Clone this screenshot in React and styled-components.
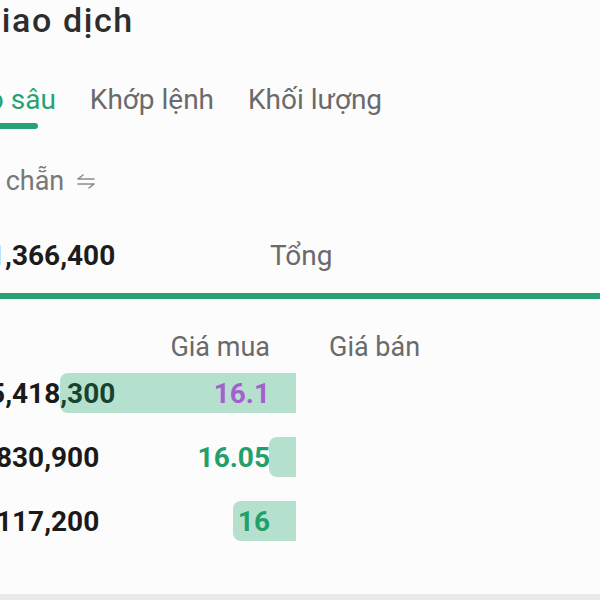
import React from 'react';
import styled, { createGlobalStyle } from 'styled-components';

const GlobalStyle = createGlobalStyle`
  html, body {
    margin: 0;
    padding: 0;
    background: #fcfcfc;
  }
  #root {
    width: 600px;
    height: 600px;
    overflow: hidden;
  }
`;

const bids = [
  { volume: '15,418,300', price: '16.1', tone: 'ref', depth: 236 },
  { volume: '2,830,900', price: '16.05', tone: 'up', depth: 27 },
  { volume: '1,117,200', price: '16', tone: 'up', depth: 63 },
];

function SwapIcon() {
  return (
    <svg width="20" height="16" viewBox="0 0 20 16" fill="none" stroke="#8a8a8a" strokeWidth="1.6" strokeLinecap="round" strokeLinejoin="round">
      <path d="M2 6h16M2 6l5-4" />
      <path d="M2 11h16M18 11l-5 4" />
    </svg>
  );
}

export default function App() {
  return (
    <>
      <GlobalStyle />
      <Page>
        <Title>Giao dịch</Title>

        <Tabs>
          <Tab active>
            Độ sâu
            <Indicator />
          </Tab>
          <Tab>Khớp lệnh</Tab>
          <Tab>Khối lượng</Tab>
        </Tabs>

        <LotLabel>
          Lô chẵn <SwapIcon />
        </LotLabel>

        <TotalRow>
          <TotalValue>1,366,400</TotalValue>
          <TotalLabel>Tổng</TotalLabel>
        </TotalRow>

        <RatioLine />

        <Book>
          <Side>
            <HeadRow>
              <HeadCell align="right">Giá mua</HeadCell>
            </HeadRow>
            {bids.map((b) => (
              <BidRow key={b.price}>
                <Volume>{b.volume}</Volume>
                <Price tone={b.tone}>{b.price}</Price>
                <DepthBar style={{ width: b.depth }} />
              </BidRow>
            ))}
          </Side>
          <Side sell>
            <HeadRow>
              <HeadCell>Giá bán</HeadCell>
            </HeadRow>
          </Side>
        </Book>

        <Footer />
      </Page>
    </>
  );
}

// the screen is scrolled a little to the right, so the page starts off-screen
const Page = styled.div`
  width: 631px;
  margin-left: -31px;
  display: flex;
  flex-direction: column;
  font-family: Roboto, "Liberation Sans", sans-serif;
`;

const Title = styled.div`
  padding-left: 8px;
  font-size: 34px;
  line-height: 40px;
  font-weight: 500;
  letter-spacing: 1.6px;
  color: #2d2d2d;
`;

const Tabs = styled.div`
  margin-top: 43px;
  display: flex;
  gap: 34px;
`;

const Tab = styled.div`
  position: relative;
  font-size: 28px;
  line-height: 34px;
  color: ${(p) => (p.active ? '#27a274' : '#6a6a6a')};
`;

const Indicator = styled.div`
  position: absolute;
  left: 0;
  top: 40px;
  width: 69px;
  height: 6px;
  border-radius: 3px;
  background: #27a274;
`;

const LotLabel = styled.div`
  margin-top: 47px;
  display: flex;
  align-items: center;
  gap: 12px;
  font-size: 27px;
  line-height: 34px;
  color: #787878;
`;

const TotalRow = styled.div`
  margin-top: 40px;
  display: flex;
  align-items: center;
  height: 34px;
`;

const TotalValue = styled.div`
  width: 301px;
  padding-left: 20px;
  box-sizing: border-box;
  font-size: 28px;
  font-weight: 700;
  color: #1c1c1c;
`;

const TotalLabel = styled.div`
  font-size: 28px;
  color: #6a6a6a;
`;

const RatioLine = styled.div`
  margin-top: 21px;
  height: 6px;
  background: #27a274;
`;

const Book = styled.div`
  margin-top: 31px;
  display: grid;
  grid-template-columns: 327px 1fr;
`;

const Side = styled.div`
  display: flex;
  flex-direction: column;
  gap: 24px;
  padding-left: ${(p) => (p.sell ? '33px' : '4px')};
`;

const HeadRow = styled.div`
  height: 34px;
  margin-bottom: -15px;
  display: flex;
`;

const HeadCell = styled.div`
  flex: 1;
  text-align: ${(p) => p.align || 'left'};
  padding-right: ${(p) => (p.align === 'right' ? '26px' : '0')};
  font-size: 27px;
  line-height: 34px;
  color: #6a6a6a;
`;

const BidRow = styled.div`
  position: relative;
  height: 40px;
  display: flex;
  align-items: center;
  justify-content: space-between;
  padding-right: 26px;
  font-size: 28px;
  font-weight: 700;
`;

const Volume = styled.div`
  color: #1a1a1a;
`;

const Price = styled.div`
  position: relative;
  z-index: 1;
  color: ${(p) => (p.tone === 'ref' ? '#a55fd0' : '#21a06c')};
`;

const DepthBar = styled.div`
  position: absolute;
  right: 0;
  top: 0;
  bottom: 0;
  border-radius: 8px 0 0 8px;
  background: rgba(20, 160, 100, 0.3);
  pointer-events: none;
`;

const Footer = styled.div`
  margin-top: 53px;
  height: 12px;
  background: #e9e9e9;
`;
